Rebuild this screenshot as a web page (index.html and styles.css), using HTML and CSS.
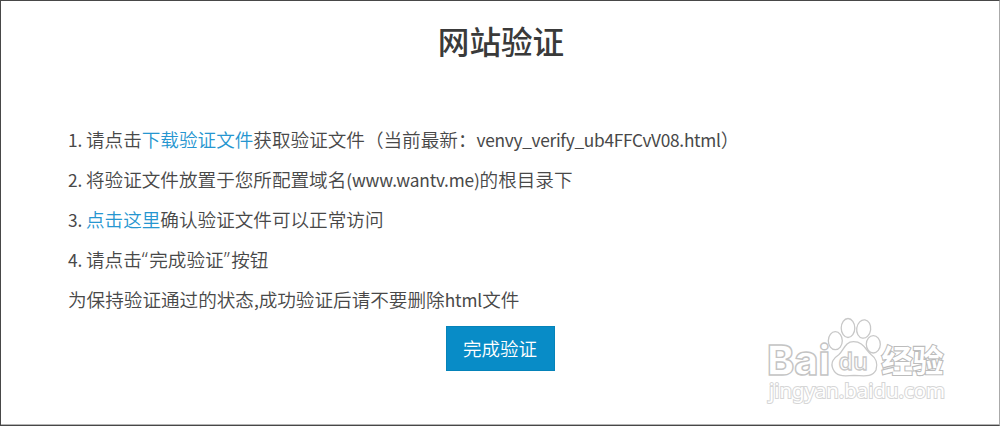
FILE: index.html
```html
<!DOCTYPE html>
<html lang="zh-CN">
<head>
<meta charset="utf-8">
<title>网站验证</title>
<link rel="stylesheet" href="styles.css">
</head>
<body>
<main class="page">
  <h1 class="title">网站验证</h1>
  <div class="steps">
    <p class="step"><span class="latin">1. </span>请点击<a class="link">下载验证文件</a>获取验证文件（当前最新：<span class="latin file">venvy_verify_ub4FFCvV08.html</span>）</p>
    <p class="step"><span class="latin">2. </span>将验证文件放置于您所配置域名<span class="latin host">(www.wantv.me)</span>的根目录下</p>
    <p class="step"><span class="latin">3. </span><a class="link">点击这里</a>确认验证文件可以正常访问</p>
    <p class="step"><span class="latin">4. </span>请点击<span class="quote">“</span>完成验证<span class="quote">”</span>按钮</p>
    <p class="step">为保持验证通过的状态<span class="latin">,</span>成功验证后请不要删除<span class="latin">html</span>文件</p>
  </div>
  <button class="submit" type="button">完成验证</button>
  <svg class="watermark" viewBox="0 0 190 100" width="190" height="100">
    <g class="logo">
      <text class="brand" x="7" y="65" textLength="63" lengthAdjust="spacingAndGlyphs">Bai</text>
      <ellipse cx="75.3" cy="30.7" rx="7" ry="9"/>
      <ellipse cx="88" cy="18" rx="6.8" ry="9.5"/>
      <ellipse cx="103.7" cy="19" rx="7" ry="9.2" transform="rotate(8 103.7 19)"/>
      <ellipse cx="113.3" cy="34.3" rx="7" ry="8.7"/>
      <path d="M93.500 31.700C103 31.700 105 39 111 44.500C116 48 118 54 116 60C112 68 103 65.500 94 65.500C86 65.500 77 68 73 59C70 52 74 48 79 44.500C84 40 85 31.700 93.500 31.700Z"/>
      <text class="du" x="78.500" y="60" textLength="29.500" lengthAdjust="spacingAndGlyphs">du</text>
      <text class="cn" x="121.500" y="62" textLength="62" lengthAdjust="spacingAndGlyphs">经验</text>
      <text class="site" x="9" y="88" textLength="176" lengthAdjust="spacingAndGlyphs">jingyan.baidu.com</text>
    </g>
  </svg>
</main>
</body>
</html>
```
FILE: styles.css
```css
body {
  margin: 0;
  background: #fff;
}

.page {
  position: relative;
  box-sizing: border-box;
  width: 1000px;
  height: 426px;
  overflow: hidden;
  border: 1px solid #484848;
  border-right-color: #aaa;
  box-shadow: inset 0 -1px #b4b4b4;
  display: flex;
  flex-direction: column;
  align-items: center;
  font-family: "Noto Sans CJK SC", sans-serif;
  color: #484848;
}

.title {
  margin: 15px 0 0 2px;
  font-size: 31.6px;
  line-height: 48px;
  font-weight: 500;
  color: #3a3a3a;
}

.steps {
  align-self: stretch;
  margin-top: 55px;
  padding-left: 67px;
}

.step {
  margin: 0;
  font-size: 18.6px;
  line-height: 40px;
  font-weight: 350;
  white-space: nowrap;
}

.latin {
  font-size: 17.3px;
  font-weight: 400;
  line-height: 1;
  letter-spacing: -0.1px;
}

.file {
  letter-spacing: -0.28px;
}

.host {
  letter-spacing: -0.2px;
}

.quote {
  font-family: "Noto Sans", sans-serif;
  font-size: 19.5px;
  line-height: 1;
  letter-spacing: 1.4px;
}

.link {
  color: #2696d0;
}

.submit {
  box-sizing: border-box;
  width: 109px;
  height: 45px;
  margin-top: 7px;
  padding: 0;
  border: 1px solid #0583b9;
  background: #088cc7;
  color: #fff;
  font-family: inherit;
  font-size: 18.5px;
  font-weight: 350;
  line-height: 43px;
}

.watermark {
  position: absolute;
  left: 759px;
  top: 309px;
}

.logo {
  fill: #fff;
  stroke: #c8c8c8;
  stroke-width: 1.3;
}

.brand {
  font: 800 41px "Inter", sans-serif;
  stroke: #c4c4c4;
  stroke-width: 1.4;
}

.du {
  font: 600 24px "Noto Sans", sans-serif;
}

.cn {
  font: 700 31px "Noto Sans CJK SC", sans-serif;
  stroke: #bcbcbc;
  stroke-width: 2.2;
  paint-order: stroke;
}

.site {
  font: 20px "Noto Sans", sans-serif;
  stroke: #d6d6d6;
  stroke-width: 2;
  paint-order: stroke;
}
```
